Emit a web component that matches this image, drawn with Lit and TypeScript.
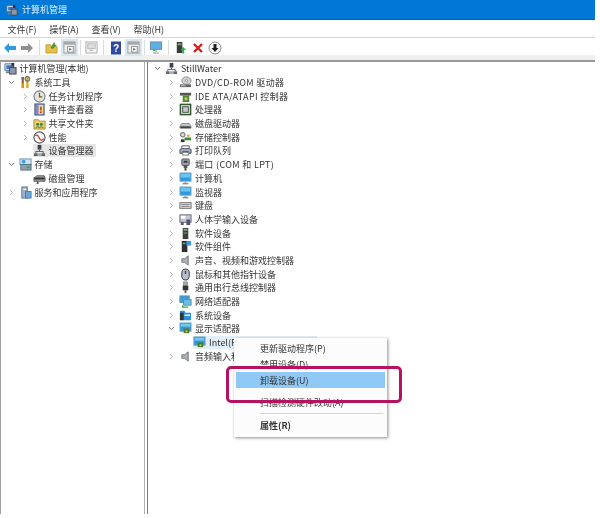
import { LitElement, html, css, svg } from "lit";
import { customElement } from "lit/decorators.js";

const ICONS: Record<string, any> = {
  root: svg`<rect x="1" y="2" width="9" height="7" fill="#dfe6f0" stroke="#56708f"/><rect x="2.500" y="3.500" width="6" height="4" fill="#3a78c8"/><rect x="6" y="6" width="7" height="7" fill="#8a97aa" stroke="#444"/><rect x="8" y="1" width="3" height="4" fill="#28345c"/><rect x="2" y="10" width="4" height="2" fill="#777"/>`,
  tools: svg`<path d="M4 1v12" stroke="#8a6a2a" stroke-width="2.400"/><path d="M3 1h2v3H3z" fill="#666"/><path d="M9 1v12" stroke="#e0a81c" stroke-width="2.600"/><circle cx="9" cy="3" r="2.400" fill="none" stroke="#777" stroke-width="1.400"/><rect x="3" y="8" width="2" height="5" fill="#d8a020"/>`,
  clock: svg`<circle cx="7" cy="7" r="6" fill="#e8e4d0" stroke="#6d7fa6" stroke-width="1.200"/><path d="M7 3v4.400h3" stroke="#7a5a20" stroke-width="1.200" fill="none"/>`,
  event: svg`<rect x="2" y="1" width="10" height="12" fill="#7c8cc8" stroke="#4a5a90"/><rect x="6" y="2" width="5" height="10" fill="#f2d880"/><path d="M8.500 4v4" stroke="#c03020" stroke-width="1.600"/><circle cx="8.500" cy="10" r="1" fill="#c03020"/>`,
  share: svg`<path d="M1 3h5l1 1.500h6V13H1z" fill="#ecd070" stroke="#a88a30"/><circle cx="5" cy="8" r="1.500" fill="#3a7a3a"/><circle cx="9" cy="8" r="1.500" fill="#3a7a3a"/><path d="M3 12c0-2 4-2 4 0M7 12c0-2 4-2 4 0" stroke="#3a7a3a" fill="none"/>`,
  perf: svg`<circle cx="7" cy="7" r="6" fill="#fbfbfb" stroke="#555" stroke-width="1.200"/><path d="M2.500 5C5 3 6 6 7 8s3 3 4.500 0" stroke="#c8352a" stroke-width="1.300" fill="none"/>`,
  devmgr: svg`<rect x="5" y="1" width="4" height="5" fill="#3c4250"/><path d="M7 6v2M3 10V8h8v2" stroke="#555" fill="none"/><rect x="1" y="10" width="4" height="3" fill="#666"/><rect x="5.500" y="10" width="3" height="3" fill="#9aa"/><rect x="9" y="10" width="4" height="3" fill="#666"/>`,
  storage: svg`<rect x="1" y="1" width="12" height="6" fill="#cfe2f2" stroke="#6a8caa"/><rect x="2" y="7" width="11" height="6" fill="#8ca0b2" stroke="#5b6d7e"/><circle cx="5" cy="4" r="2" fill="#3aa0d8"/><rect x="8" y="9" width="4" height="2" fill="#4ca84c"/>`,
  disk: svg`<path d="M2 6l2-2h8l1 2v4H1V6z" fill="#9a9a9a" stroke="#444" stroke-width=".8"/><rect x="1.500" y="6" width="11" height="2" fill="#333"/><rect x="4" y="10" width="2" height="3" fill="#555"/>`,
  services: svg`<rect x="3" y="1" width="6" height="12" fill="#9fb2c6" stroke="#66788a"/><rect x="7" y="6" width="6" height="7" fill="#6ca6d8" stroke="#4a7aa8"/><rect x="4.500" y="3" width="3" height="1" fill="#fff"/>`,
  dvd: svg`<ellipse cx="8" cy="5" rx="5" ry="4" fill="#d0d4d8" stroke="#888"/><circle cx="8" cy="5" r="1.200" fill="#fff" stroke="#888"/><rect x="1" y="9" width="12" height="3" fill="#666"/><rect x="2" y="10" width="5" height="1" fill="#ccc"/>`,
  ide: svg`<rect x="1" y="3" width="12" height="3" fill="#555"/><rect x="4" y="6" width="7" height="7" fill="#4a8a3a"/><rect x="6" y="8" width="3" height="3" fill="#e0c040"/>`,
  cpu: svg`<rect x="1.500" y="1.500" width="11" height="11" fill="#e4e8d8" stroke="#2e5a2e" stroke-width="1.600"/><rect x="4" y="4" width="6" height="6" fill="#c8ccc0" stroke="#445"/>`,
  hdd: svg`<path d="M1 10l2-3h8l2 3v2H1z" fill="#c0c4c8" stroke="#666" stroke-width=".7"/><rect x="1.500" y="10" width="11" height="2" fill="#444"/>`,
  storctl: svg`<circle cx="4" cy="4" r="2.500" fill="#c8c8c8" stroke="#666"/><circle cx="4" cy="4" r=".8" fill="#fff"/><rect x="6" y="7" width="7" height="3" fill="#3a8a3a"/><rect x="2" y="9" width="4" height="3" fill="#333"/><circle cx="10" cy="5" r="1.500" fill="#e0b040"/>`,
  printer: svg`<path d="M3 5V2h8v3" fill="#fff" stroke="#555"/><path d="M1 10V6l2-1h8l2 1v4h-2l-1-2H4l-1 2z" fill="#9fb4c4" stroke="#445"/><rect x="4" y="9" width="6" height="3" fill="#fff" stroke="#777"/>`,
  port: svg`<rect x="3" y="1" width="8" height="7" rx="1" fill="#9aa0a6" stroke="#555"/><rect x="5" y="3" width="4" height="2" fill="#333"/><rect x="5" y="8" width="4" height="3" fill="#555"/><rect x="6" y="11" width="2" height="2.500" fill="#333"/>`,
  monitor: svg`<rect x="1" y="1" width="12" height="9" fill="#2a9ae0" stroke="#8ab0c8"/><rect x="2" y="2" width="10" height="4" fill="#6cc4f0"/><path d="M4 12.500h6" stroke="#888" stroke-width="1.600"/><rect x="6" y="10" width="2" height="2" fill="#aab"/>`,
  keyboard: svg`<rect x="1" y="4" width="12" height="6" fill="#e8e8e8" stroke="#666"/><path d="M2.500 6h9M2.500 8h9" stroke="#777"/>`,
  hid: svg`<rect x="1" y="2" width="12" height="8" fill="#bcc8d4" stroke="#667"/><rect x="2" y="3" width="5" height="3" fill="#fff"/><rect x="2" y="10" width="3" height="3" fill="#555"/><rect x="8" y="7" width="4" height="6" fill="#556"/>`,
  softdev: svg`<rect x="4" y="1" width="6" height="12" fill="#3c4038"/><rect x="5" y="2" width="4" height="2" fill="#7ab07a"/><rect x="5" y="6" width="4" height="1" fill="#999"/>`,
  softcomp: svg`<rect x="3" y="1" width="6" height="12" fill="#2c3034"/><rect x="4" y="3" width="3" height="1.500" fill="#7ab07a"/><rect x="8" y="1" width="5" height="5" fill="#3a9ae0"/>`,
  sound: svg`<path d="M3 5h3l4-3v10L6 9H3z" fill="#aab0b8" stroke="#666" stroke-width=".8"/>`,
  mouse: svg`<rect x="3" y="1" width="8" height="12" rx="4" fill="#b8bec8" stroke="#3a4050" stroke-width="1.100"/><rect x="6.300" y="3" width="1.400" height="3.500" fill="#3a4050"/>`,
  usb: svg`<rect x="5" y="1" width="4" height="4" fill="#aaa" stroke="#666" stroke-width=".6"/><rect x="4" y="5" width="6" height="5" fill="#333"/><rect x="6" y="10" width="2" height="3" fill="#555"/>`,
  net: svg`<rect x="1" y="1" width="10" height="7" fill="#38a0dc" stroke="#5a8ca8"/><rect x="5" y="5" width="8" height="6" fill="#68c0ea" stroke="#5a8ca8"/><path d="M4 11v2h6" stroke="#3ca83c" stroke-width="1.400" fill="none"/>`,
  sys: svg`<path d="M1 2h5l1 2h6v8H1z" fill="#2a90d8"/><rect x="1" y="4" width="4" height="8" fill="#333"/><rect x="6" y="6" width="6" height="1.500" fill="#fff"/>`,
  display: svg`<rect x="1" y="1" width="12" height="9" fill="#2e98de" stroke="#7fa6c2"/><rect x="2" y="2" width="10" height="3" fill="#74c6f0"/><rect x="5" y="7" width="6" height="5" fill="#4a7a2a"/><rect x="7" y="9" width="2" height="2" fill="#e0c040"/>`,
};

const icon = (name: string, size = 13) =>
  html`<svg class="ic" width=${size} height=${size} viewBox="0 0 14 14">${ICONS[name]}</svg>`;

const chev = (state: string) =>
  state === "open"
    ? html`<svg class="ch" width="7" height="7" viewBox="0 0 7 7"><path d="M1 2l2.500 2.500L6 2" fill="none" stroke="#666" stroke-width=".9"/></svg>`
    : state === "closed"
      ? html`<svg class="ch" width="7" height="7" viewBox="0 0 7 7"><path d="M2 1l2.500 2.500L2 6" fill="none" stroke="#aaa" stroke-width=".9"/></svg>`
      : state === "none"
        ? ""
        : html`<span class="ch"></span>`;

type Row = [number, string, string, string, string?];

const LEFT: Row[] = [
  [0, "none", "root", "计算机管理(本地)"],
  [1, "open", "tools", "系统工具"],
  [2, "closed", "clock", "任务计划程序"],
  [2, "closed", "event", "事件查看器"],
  [2, "closed", "share", "共享文件夹"],
  [2, "closed", "perf", "性能"],
  [2, "", "devmgr", "设备管理器", "cur"],
  [1, "open", "storage", "存储"],
  [2, "", "disk", "磁盘管理"],
  [1, "closed", "services", "服务和应用程序"],
];

const RIGHT: Row[] = [
  [0, "open", "devmgr", "StillWater"],
  [1, "closed", "dvd", "DVD/CD-ROM 驱动器", "ls"],
  [1, "closed", "ide", "IDE ATA/ATAPI 控制器", "ls"],
  [1, "closed", "cpu", "处理器"],
  [1, "closed", "hdd", "磁盘驱动器"],
  [1, "closed", "storctl", "存储控制器"],
  [1, "closed", "printer", "打印队列"],
  [1, "closed", "port", "端口 (COM 和 LPT)", "ls"],
  [1, "closed", "monitor", "计算机"],
  [1, "closed", "monitor", "监视器"],
  [1, "closed", "keyboard", "键盘"],
  [1, "closed", "hid", "人体学输入设备"],
  [1, "closed", "softdev", "软件设备"],
  [1, "closed", "softcomp", "软件组件"],
  [1, "closed", "sound", "声音、视频和游戏控制器"],
  [1, "closed", "mouse", "鼠标和其他指针设备"],
  [1, "closed", "usb", "通用串行总线控制器"],
  [1, "closed", "net", "网络适配器"],
  [1, "closed", "sys", "系统设备"],
  [1, "open", "display", "显示适配器"],
  [2, "", "display", "Intel(R) UHD Graphics 630", "sel"],
  [1, "closed", "sound", "音频输入和输出"],
];

const WINDOW_ICON = html`<svg width="13" height="13" viewBox="0 0 14 14"><rect x="1" y="1" width="12" height="12" fill="#f0f0f0" stroke="#9a9a9a"/><rect x="1" y="1" width="12" height="3" fill="#a8a8a8"/><rect x="5" y="6" width="6" height="6" fill="#fff" stroke="#888"/><path d="M6.500 7.500l3 1.500-3 1.500z" fill="#3a8a3a"/></svg>`;

@customElement("app-root")
export class AppRoot extends LitElement {
  static styles = css`
    :host {
      display: block;
      position: relative;
      width: 600px;
      height: 518px;
      overflow: hidden;
      background: #fff;
      font-family: "Noto Sans CJK SC", "Noto Sans", sans-serif;
      font-size: 9px;
      color: #333;
    }
    .win {
      display: flex;
      flex-direction: column;
      width: 595px;
      height: 514px;
      filter: blur(0.45px);
    }
    .title {
      display: flex;
      align-items: center;
      gap: 1px;
      height: 20px;
      padding-left: 6px;
      background: #0078d7;
      border-bottom: 1px solid #0a5fa8;
      box-sizing: border-box;
      color: #e6f2fb;
    }
    .menu {
      display: flex;
      align-items: center;
      gap: 12.700px;
      height: 17px;
      padding-left: 7.500px;
      border-bottom: 1px solid #d8d8d8;
      box-sizing: border-box;
      margin-top: 1px;
    }
    .toolbar {
      display: flex;
      align-items: center;
      height: 24px;
      padding: 0 0 1px 1px;
      box-sizing: border-box;
      background: linear-gradient(#fff 0 17px, #efefef 17px 22px, #999 22px);
    }
    .tb {
      display: flex;
      align-items: center;
      justify-content: center;
      width: 17.500px;
      height: 17px;
      margin-top: -4px;
    }
    .tb.on {
      background: #d6e6f4;
    }
    .sep {
      width: 1px;
      height: 15px;
      margin: -4px 2px 0;
      background: #dcdcdc;
    }
    .sep.w {
      margin: -4px 3px 0;
    }
    .sep.m {
      margin: -4px 2.750px 0;
    }
    .panes {
      flex: 1;
      display: grid;
      grid-template-columns: 145px 1fr;
      column-gap: 2px;
      min-height: 0;
    }
    .pane {
      border-left: 1.500px solid #a0a0a0;
    }
    .pane.l {
      border-right: 1.500px solid #b0b0b0;
      padding-left: 1.500px;
    }
    .pane.r {
      border-left-color: #808080;
      padding-left: 6px;
    }
    .row {
      display: flex;
      align-items: center;
      height: 13.700px;
      white-space: nowrap;
    }
    .ch {
      display: block;
      flex: none;
      width: 7px;
      margin-right: 4px;
    }
    .ic {
      flex: none;
      margin-right: 3px;
    }
    .lbl {
      display: flex;
      align-items: center;
    }
    .ls {
      letter-spacing: 0.35px;
    }
    .cur {
      background: #e6e6e6;
      padding-right: 2px;
    }
    .sel {
      background: #e2eff9;
      width: 124px;
      overflow: hidden;
    }
    .ctx {
      position: absolute;
      left: 234px;
      top: 338px;
      width: 153px;
      height: 99px;
      box-sizing: border-box;
      padding: 2px;
      background: #fcfcfc;
      box-shadow: 1px 1px 3px rgba(0, 0, 0, 0.45);
      display: flex;
      flex-direction: column;
      filter: blur(0.4px);
    }
    .mi {
      display: flex;
      align-items: center;
      height: 16px;
      padding-left: 24px;
      flex: none;
    }
    .mi.hl {
      background: #90c8f6;
    }
    .mi.sp {
      margin-top: 6px;
    }
    .mi.b {
      font-weight: 700;
      margin-top: 3px;
    }
    .rule {
      height: 1px;
      margin: 3px 2px 0 24px;
      background: #d4d4d4;
      flex: none;
    }
    .mark {
      position: absolute;
      left: 226px;
      top: 366px;
      width: 176px;
      height: 37px;
      box-sizing: border-box;
      border: 3px solid #b5135f;
      border-radius: 5px;
      filter: blur(0.3px);
    }
  `;

  private tree(rows: Row[], offset: number, min: number) {
    return rows.map(
      ([d, st, ic, t, cls]) => html`<div class="row" style="padding-left:${Math.max(min, d * 14 + offset)}px">
        ${chev(st)}
        <span class="lbl ${cls ?? ""}">${icon(ic)}<span>${t}</span></span>
      </div>`
    );
  }

  render() {
    return html`
      <div class="win">
        <div class="title">${icon("root", 12)}<span>计算机管理</span></div>
        <div class="menu">
          <span>文件(F)</span><span>操作(A)</span><span>查看(V)</span><span>帮助(H)</span>
        </div>
        <div class="toolbar">
          <span class="tb"><svg width="14" height="12" viewBox="0 0 14 12"><path d="M1 6l5-5v3h7v4H6v3z" fill="#2f9ae0"/></svg></span>
          <span class="tb"><svg width="14" height="12" viewBox="0 0 14 12"><path d="M13 6L8 1v3H1v4h7v3z" fill="#909090"/></svg></span>
          <span class="sep w"></span>
          <span class="tb"><svg width="13" height="13" viewBox="0 0 14 14"><path d="M1 4h5l1 2h6v7H1z" fill="#e8c048" stroke="#a88a30" stroke-width=".7"/><path d="M6 7l4-6 1 3 2 0-5 5z" fill="#4a9a3a"/></svg></span>
          <span class="tb on">${WINDOW_ICON}</span>
          <span class="sep"></span>
          <span class="tb"><svg width="13" height="13" viewBox="0 0 14 14"><rect x="1" y="1" width="12" height="12" fill="#f4f4f4" stroke="#aaa"/><rect x="3" y="3" width="8" height="5" fill="#ddd" stroke="#bbb"/><path d="M5 10h4" stroke="#aaa"/></svg></span>
          <span class="sep m"></span>
          <span class="tb"><svg width="12" height="14" viewBox="0 0 12 14"><rect x="1" y="0.500" width="10" height="13" fill="#2b4a9e"/><text x="6" y="11" font-size="10" font-weight="700" fill="#fff" text-anchor="middle" font-family="Liberation Sans">?</text></svg></span>
          <span class="tb on">${WINDOW_ICON}</span>
          <span class="sep"></span>
          <span class="tb"><svg width="14" height="13" viewBox="0 0 14 14"><rect x="1" y="1" width="12" height="8" fill="#5cb0e4" stroke="#6a90a8"/><path d="M7 9v3M4 13h6" stroke="#888"/><rect x="4" y="9" width="2" height="2" fill="#4a4"/></svg></span>
          <span class="sep w"></span>
          <span class="tb"><svg width="13" height="14" viewBox="0 0 14 14"><rect x="3" y="0.500" width="6" height="12" fill="#3a3e38"/><rect x="4" y="2" width="4" height="2" fill="#7a7"/><path d="M10 6l3 3h-2v4H9V9H7z" fill="#2eae4a"/></svg></span>
          <span class="tb"><svg width="12" height="12" viewBox="0 0 12 12"><path d="M2 2l8 8M10 2l-8 8" stroke="#d81e1e" stroke-width="2.400"/></svg></span>
          <span class="tb"><svg width="14" height="14" viewBox="0 0 14 14"><circle cx="7" cy="7" r="6" fill="#fff" stroke="#888"/><path d="M5.500 3h3v4h2L7 11 3.500 7h2z" fill="#222"/></svg></span>
        </div>
        <div class="panes">
          <div class="pane l">${this.tree(LEFT, -9, 1)}</div>
          <div class="pane r">${this.tree(RIGHT, 0, 0)}</div>
        </div>
      </div>
      <div class="ctx">
        <div class="mi">更新驱动程序(P)</div>
        <div class="mi">禁用设备(D)</div>
        <div class="mi hl">卸载设备(U)</div>
        <div class="mi sp">扫描检测硬件改动(A)</div>
        <div class="rule"></div>
        <div class="mi b">属性(R)</div>
      </div>
      <div class="mark"></div>
    `;
  }
}
